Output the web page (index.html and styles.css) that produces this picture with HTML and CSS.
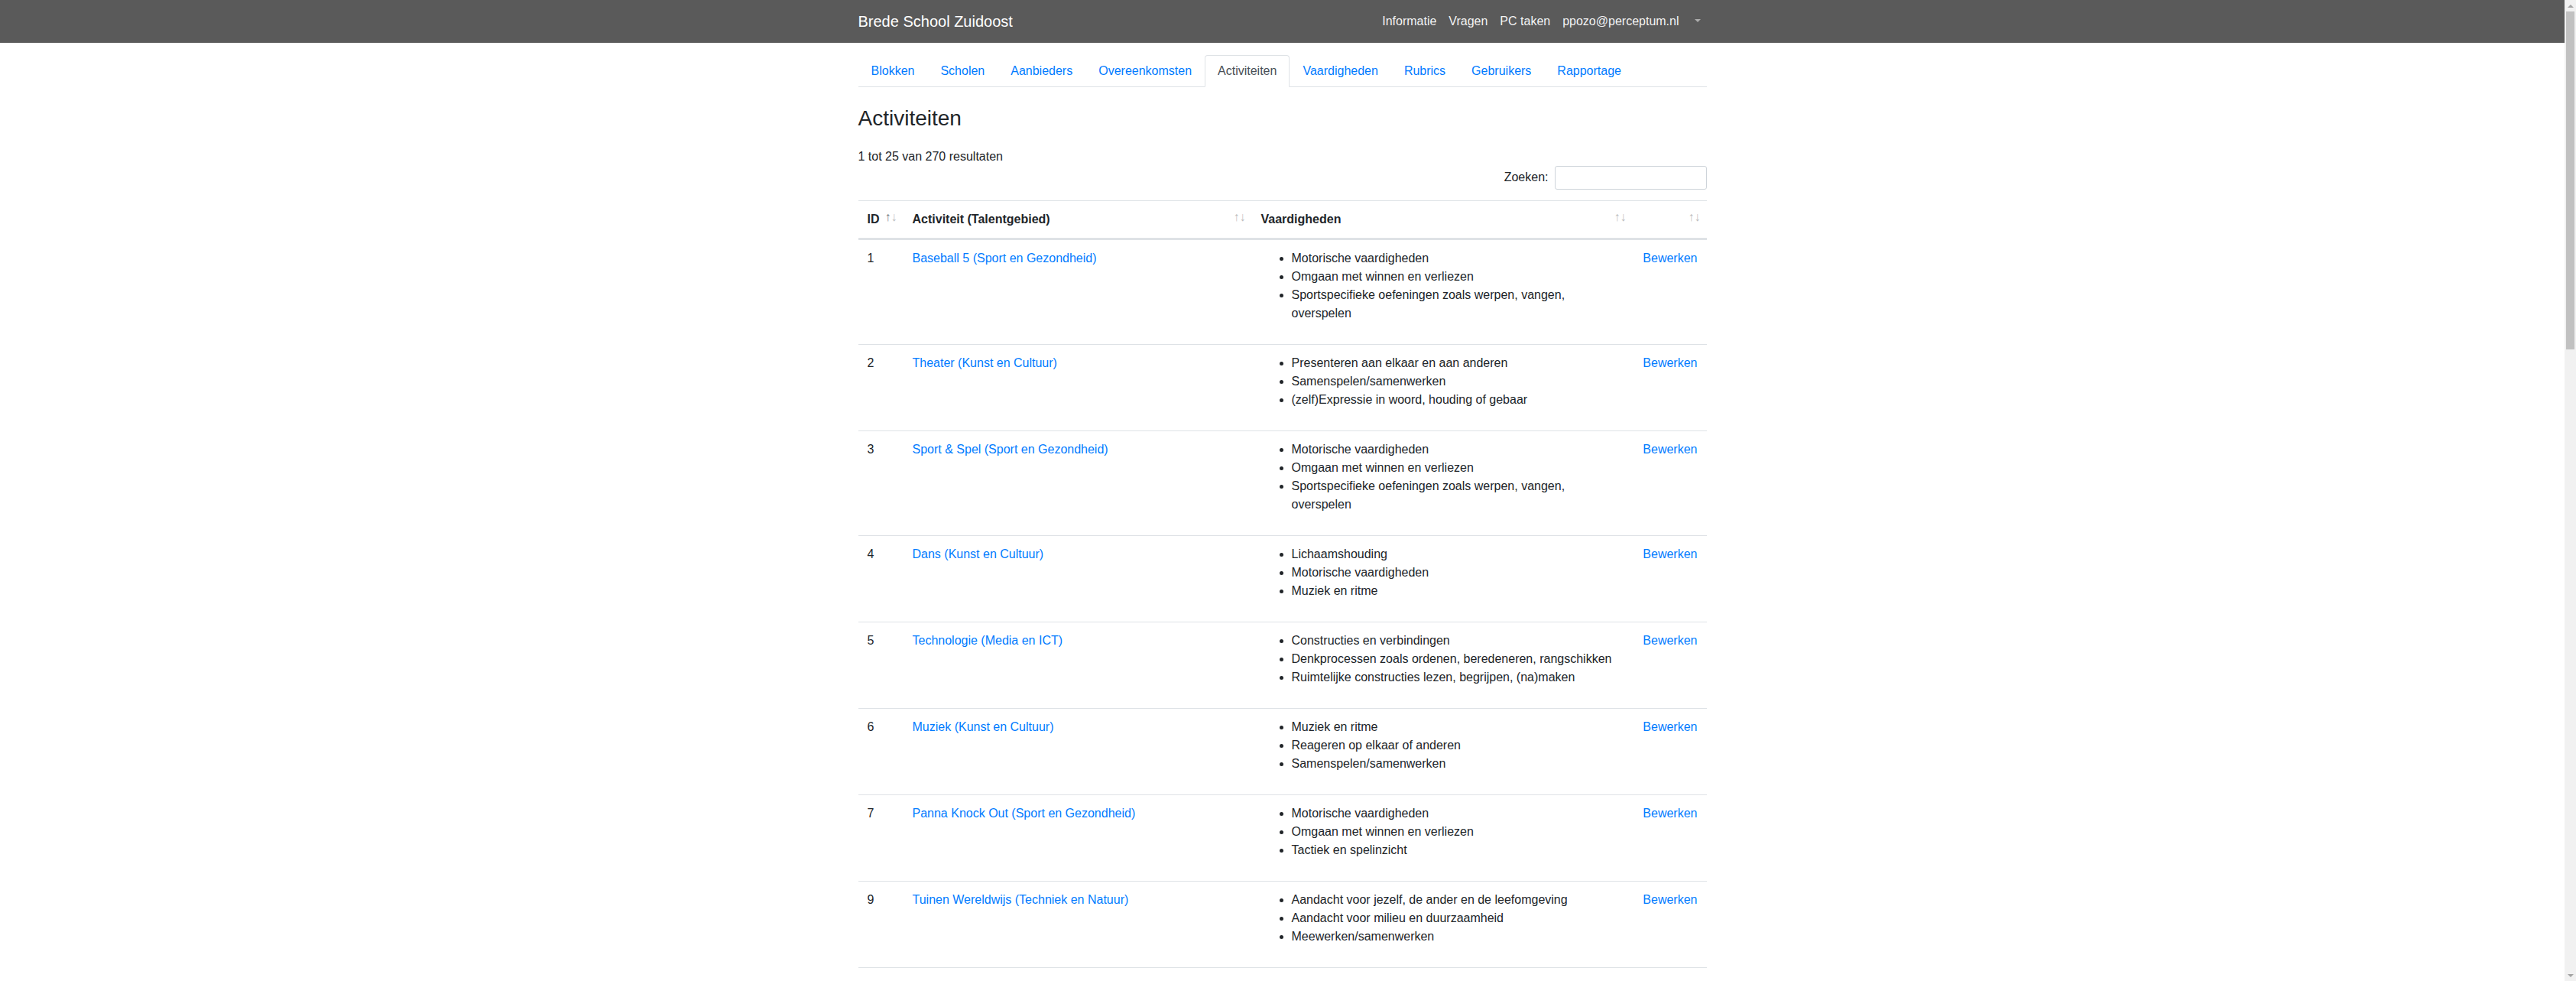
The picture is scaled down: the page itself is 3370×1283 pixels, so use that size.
FILE: index.html
```html
<!DOCTYPE html>
<html lang="nl">
<head>
<meta charset="utf-8">
<title>Activiteiten - Brede School Zuidoost</title>
<link rel="stylesheet" href="styles.css">
</head>
<body>
<div class="screen">
  <div class="page">
    <nav class="navbar">
      <div class="container nav-inner">
        <a class="brand" href="#">Brede School Zuidoost</a>
        <ul class="nav-right">
          <li><a class="nav-link" href="#">Informatie</a></li>
          <li><a class="nav-link" href="#">Vragen</a></li>
          <li><a class="nav-link" href="#">PC taken</a></li>
          <li><a class="nav-link" href="#">ppozo@perceptum.nl</a></li>
          <li><a class="nav-link toggle" href="#"></a></li>
        </ul>
      </div>
    </nav>

    <main class="container">
      <ul class="tabs">
        <li><a class="tab" href="#">Blokken</a></li>
        <li><a class="tab" href="#">Scholen</a></li>
        <li><a class="tab" href="#">Aanbieders</a></li>
        <li><a class="tab" href="#">Overeenkomsten</a></li>
        <li><a class="tab active" href="#">Activiteiten</a></li>
        <li><a class="tab" href="#">Vaardigheden</a></li>
        <li><a class="tab" href="#">Rubrics</a></li>
        <li><a class="tab" href="#">Gebruikers</a></li>
        <li><a class="tab" href="#">Rapportage</a></li>
      </ul>

      <h3 class="title">Activiteiten</h3>
      <p class="count">1 tot 25 van 270 resultaten</p>

      <div class="filter">
        <label class="filter-label">Zoeken:<input class="filter-input" type="search"></label>
      </div>

      <table class="data">
        <thead>
          <tr>
            <th class="c-id sorting asc">ID</th>
            <th class="c-act sorting">Activiteit (Talentgebied)</th>
            <th class="c-vaar sorting">Vaardigheden</th>
            <th class="c-edit sorting"></th>
          </tr>
        </thead>
        <tbody>
          <tr>
            <td>1</td>
            <td><a href="#">Baseball 5 (Sport en Gezondheid)</a></td>
            <td><ul class="skills"><li>Motorische vaardigheden</li><li>Omgaan met winnen en verliezen</li><li>Sportspecifieke oefeningen zoals werpen, vangen, overspelen</li></ul></td>
            <td class="edit"><a href="#">Bewerken</a></td>
          </tr>
          <tr>
            <td>2</td>
            <td><a href="#">Theater (Kunst en Cultuur)</a></td>
            <td><ul class="skills"><li>Presenteren aan elkaar en aan anderen</li><li>Samenspelen/samenwerken</li><li>(zelf)Expressie in woord, houding of gebaar</li></ul></td>
            <td class="edit"><a href="#">Bewerken</a></td>
          </tr>
          <tr>
            <td>3</td>
            <td><a href="#">Sport &amp; Spel (Sport en Gezondheid)</a></td>
            <td><ul class="skills"><li>Motorische vaardigheden</li><li>Omgaan met winnen en verliezen</li><li>Sportspecifieke oefeningen zoals werpen, vangen, overspelen</li></ul></td>
            <td class="edit"><a href="#">Bewerken</a></td>
          </tr>
          <tr>
            <td>4</td>
            <td><a href="#">Dans (Kunst en Cultuur)</a></td>
            <td><ul class="skills"><li>Lichaamshouding</li><li>Motorische vaardigheden</li><li>Muziek en ritme</li></ul></td>
            <td class="edit"><a href="#">Bewerken</a></td>
          </tr>
          <tr>
            <td>5</td>
            <td><a href="#">Technologie (Media en ICT)</a></td>
            <td><ul class="skills"><li>Constructies en verbindingen</li><li>Denkprocessen zoals ordenen, beredeneren, rangschikken</li><li>Ruimtelijke constructies lezen, begrijpen, (na)maken</li></ul></td>
            <td class="edit"><a href="#">Bewerken</a></td>
          </tr>
          <tr>
            <td>6</td>
            <td><a href="#">Muziek (Kunst en Cultuur)</a></td>
            <td><ul class="skills"><li>Muziek en ritme</li><li>Reageren op elkaar of anderen</li><li>Samenspelen/samenwerken</li></ul></td>
            <td class="edit"><a href="#">Bewerken</a></td>
          </tr>
          <tr>
            <td>7</td>
            <td><a href="#">Panna Knock Out (Sport en Gezondheid)</a></td>
            <td><ul class="skills"><li>Motorische vaardigheden</li><li>Omgaan met winnen en verliezen</li><li>Tactiek en spelinzicht</li></ul></td>
            <td class="edit"><a href="#">Bewerken</a></td>
          </tr>
          <tr>
            <td>9</td>
            <td><a href="#">Tuinen Wereldwijs (Techniek en Natuur)</a></td>
            <td><ul class="skills"><li>Aandacht voor jezelf, de ander en de leefomgeving</li><li>Aandacht voor milieu en duurzaamheid</li><li>Meewerken/samenwerken</li></ul></td>
            <td class="edit"><a href="#">Bewerken</a></td>
          </tr>
        </tbody>
      </table>
    </main>
  </div>

  <div class="vscroll">
    <div class="sb-btn"><span class="sb-up"></span></div>
    <div class="sb-thumb"></div>
    <div class="sb-track"></div>
    <div class="sb-btn"><span class="sb-down"></span></div>
  </div>
</div>
</body>
</html>
```

FILE: styles.css
```css
*, *::before, *::after { box-sizing: border-box; }

html, body {
  margin: 0;
  padding: 0;
  height: 100%;
  overflow: hidden;
}

body {
  font-family: "Liberation Sans", Arial, Helvetica, sans-serif;
  font-size: 16px;
  line-height: 1.5;
  color: #212529;
  background: #fff;
}

a { color: #007bff; text-decoration: none; }

.screen {
  display: flex;
  height: 100vh;
  overflow: hidden;
}

.page {
  flex: 1;
  min-width: 0;
  overflow: hidden;
}

.container {
  width: 1140px;
  margin: 0 auto;
  padding: 0 15px;
}

/* ---------- navbar ---------- */
.navbar {
  background: #5a5a5a;
  padding: 8px 16px;
}

.nav-inner {
  display: flex;
  align-items: center;
  justify-content: space-between;
}

.brand {
  font-size: 20px;
  line-height: 30px;
  padding: 5px 0;
  color: #fff;
}

.nav-right {
  display: flex;
  list-style: none;
  margin: 0;
  padding: 0;
}

.nav-link {
  display: block;
  padding: 8px;
  line-height: 24px;
  color: rgba(255, 255, 255, 0.94);
}

.toggle {
  color: rgba(255, 255, 255, 0.5);
}

.toggle::after {
  content: "";
  display: inline-block;
  margin-left: 4px;
  vertical-align: 4px;
  border-top: 4px solid;
  border-left: 4px solid transparent;
  border-right: 4px solid transparent;
  border-bottom: 0;
}

/* ---------- tabs ---------- */
.tabs {
  display: flex;
  list-style: none;
  margin: 16px 0 0;
  padding: 0;
  border-bottom: 1px solid #dee2e6;
}

.tab {
  display: block;
  padding: 8px 16px;
  line-height: 24px;
  margin-bottom: -1px;
  border: 1px solid transparent;
  border-top-left-radius: 4px;
  border-top-right-radius: 4px;
  color: #007bff;
}

.tab.active {
  color: #495057;
  background: #fff;
  border-color: #dee2e6 #dee2e6 #fff;
}

/* ---------- heading ---------- */
.title {
  font-size: 28px;
  font-weight: 500;
  line-height: 1.2;
  margin: 24px 0 21px;
}

.count {
  margin: 0;
}

/* ---------- filter ---------- */
.filter {
  display: flex;
  justify-content: flex-end;
  margin-top: 0;
}

.filter-label {
  display: flex;
  align-items: center;
  white-space: nowrap;
}

.filter-input {
  margin-left: 8px;
  width: 199px;
  height: 31px;
  padding: 4px 8px;
  font-family: inherit;
  font-size: 14px;
  border: 1px solid #ced4da;
  border-radius: 3px;
  background: #fff;
  outline: none;
}

/* ---------- table ---------- */
.data {
  width: 100%;
  margin-top: 14px;
  border-collapse: separate;
  border-spacing: 0;
  table-layout: fixed;
}

.data th,
.data td {
  padding: 12px;
  vertical-align: top;
  border-top: 1px solid #dee2e6;
  text-align: left;
}

.data th {
  vertical-align: bottom;
  border-bottom: 2px solid #dee2e6;
  font-weight: 700;
}

.c-id { width: 59px; }
.c-act { width: 456px; }
.c-vaar { width: 498px; }
.c-edit { width: 97px; }

.data th.sorting {
  position: relative;
  padding-right: 30px;
}

.data th.sorting::before,
.data th.sorting::after {
  position: absolute;
  bottom: 0.9em;
  display: block;
  opacity: 0.3;
  font-weight: 400;
}

.data th.sorting::before {
  right: 1em;
  content: "\2191";
}

.data th.sorting::after {
  right: 0.5em;
  content: "\2193";
}

.data th.asc::before {
  opacity: 0.6;
}

.data td.edit {
  text-align: right;
}

.data tbody tr:last-child td {
  border-bottom: 1px solid #dee2e6;
}

.skills {
  margin: 0 0 16px;
  padding-left: 40px;
}

/* ---------- fake scrollbar ---------- */
.vscroll {
  width: 15px;
  flex: none;
  background: #f1f1f1;
  display: flex;
  flex-direction: column;
}

.sb-btn {
  height: 15px;
  display: flex;
  align-items: center;
  justify-content: center;
}

.sb-up {
  border-bottom: 4px solid #a3a3a3;
  border-left: 4px solid transparent;
  border-right: 4px solid transparent;
}

.sb-down {
  border-top: 4px solid #a3a3a3;
  border-left: 4px solid transparent;
  border-right: 4px solid transparent;
}

.sb-thumb {
  height: 442px;
  margin: 0 2px;
  background: #c1c1c1;
}

.sb-track {
  flex: 1;
}
```
